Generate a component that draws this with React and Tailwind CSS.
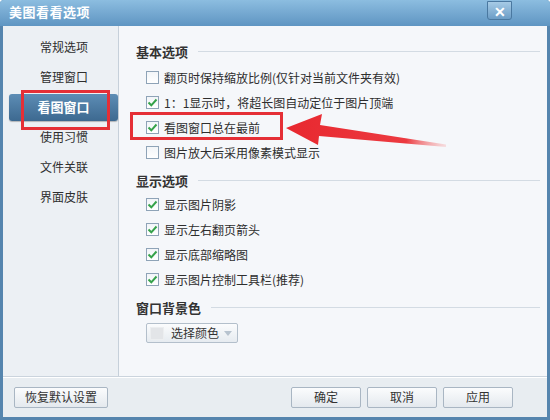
const FONT = { fontFamily: '"Noto Sans CJK SC", "Noto Sans", sans-serif' };

const navItems = ['常规选项', '管理窗口', '看图窗口', '使用习惯', '文件关联', '界面皮肤'];

function CheckBox({ checked }) {
  return (
    <span className="w-[13px] h-[13px] shrink-0 border border-[#8ea3b7] bg-gradient-to-b from-[#f2f5f8] to-white flex items-center justify-center">
      {checked && (
        <svg width="11" height="11" viewBox="0 0 11 11">
          <path d="M1.5 5.5 L4.3 8.3 L9.5 2.5" fill="none" stroke="#35a24a" strokeWidth="2" />
        </svg>
      )}
    </span>
  );
}

function Row({ checked, children }) {
  return (
    <div className="h-[25px] flex items-center gap-[5px] pl-[10px]">
      <CheckBox checked={checked} />
      <span className="text-[12px] text-[#2e2e2e] leading-none">{children}</span>
    </div>
  );
}

function Heading({ children, className = '' }) {
  return (
    <div className={'h-[20px] flex items-center gap-[10px] ' + className}>
      <span className="text-[13px] font-bold text-[#333] leading-none">{children}</span>
      <span className="flex-1 h-px bg-[#d3dbe3] mr-[7px]" />
    </div>
  );
}

function Btn({ children, className = '' }) {
  return (
    <button className={'h-[21px] border border-[#a9b6c3] rounded-[2px] bg-gradient-to-b from-[#fbfcfd] to-[#e4e9ee] text-[12px] text-[#333] leading-none ' + className}>
      {children}
    </button>
  );
}

export default function App() {
  return (
    <div style={FONT} className="relative w-[550px] h-[420px] flex flex-col bg-[#5585ae] rounded-t-[4px] overflow-hidden">
      {/* title bar */}
      <div className="h-[26px] shrink-0 flex items-start justify-between bg-gradient-to-b from-[#8cbde0] to-[#5f95c2] pl-[9px] pr-[38px]">
        <span className="mt-[5px] text-white text-[13px] font-bold leading-none tracking-[0.5px]">美图看看选项</span>
        <span className="mt-px w-[25px] h-[19px] border border-[#4a78a0] rounded-b-[3px] bg-gradient-to-b from-[#a6cbe6] to-[#6c9dc6] flex items-center justify-center text-white text-[14px] font-bold leading-none">
          ✕
        </span>
      </div>

      {/* body */}
      <div className="flex-1 mx-[3px] mb-[3px] flex flex-col bg-[#f5f7fa]">
        <div className="flex h-[350px]">
          {/* sidebar */}
          <div className="w-[116px] shrink-0 bg-[#ecf0f4] border-r border-[#c6d0da] pt-[6px]">
            {navItems.map((t, i) =>
              i === 2 ? (
                <div key={t} className="h-[30px] flex items-center">
                  <div className="relative z-10 ml-[6px] w-[110px] h-[27px] rounded-[3px] bg-gradient-to-b from-[#5d8db5] to-[#3d6990] shadow-[0_1px_1px_rgba(0,0,0,0.25)] flex items-center justify-center text-white text-[13px] font-bold">
                    {t}
                  </div>
                </div>
              ) : (
                <div key={t} className="h-[30px] ml-[6px] w-[110px] flex items-center justify-center text-[12px] text-[#2e2e2e]">
                  {t}
                </div>
              )
            )}
          </div>

          {/* options panel */}
          <div className="flex-1 pt-[15px] pl-[17px]">
            <Heading>基本选项</Heading>
            <div className="mt-[4px]">
              <Row>翻页时保持缩放比例(仅针对当前文件夹有效)</Row>
              <Row checked>1：1显示时，将超长图自动定位于图片顶端</Row>
              <Row checked>看图窗口总在最前</Row>
              <Row>图片放大后采用像素模式显示</Row>
            </div>
            <Heading className="mt-[5px]">显示选项</Heading>
            <div className="mt-[2px]">
              <Row checked>显示图片阴影</Row>
              <Row checked>显示左右翻页箭头</Row>
              <Row checked>显示底部缩略图</Row>
              <Row checked>显示图片控制工具栏(推荐)</Row>
            </div>
            <Heading className="mt-[5px]">窗口背景色</Heading>
            <div className="mt-[6px] ml-[10px] w-[92px] h-[20px] border border-[#b3bfcb] rounded-[2px] bg-gradient-to-b from-[#fbfcfd] to-[#e6ebf0] flex items-center pl-[3px]">
              <span className="w-[14px] h-[13px] bg-[#e3e5e8] border border-[#eceef0]" />
              <span className="ml-[7px] text-[12px] text-[#333] leading-none">选择颜色</span>
              <svg className="ml-[5px]" width="8" height="5" viewBox="0 0 8 5">
                <path d="M0 0 H8 L4 5 Z" fill="#b7c3cf" />
              </svg>
            </div>
          </div>
        </div>

        {/* footer */}
        <div className="flex-1 border-t border-[#cbd4dd] bg-[#e8edf1] shadow-[inset_0_1px_0_#ffffff] flex items-center pl-[11px] pr-[34px]">
          <Btn className="w-[94px]">恢复默认设置</Btn>
          <div className="ml-auto flex gap-[6px]">
            <Btn className="w-[70px]">确定</Btn>
            <Btn className="w-[70px]">取消</Btn>
            <Btn className="w-[70px]">应用</Btn>
          </div>
        </div>
      </div>

      {/* annotations */}
      <div className="absolute left-[21px] top-[90px] w-[89px] h-[40px] border-[3px] border-[#e52f36] z-20" />
      <div className="absolute left-[130px] top-[112px] w-[153px] h-[28px] border-[3px] border-[#e52f36] z-20" />
      <svg className="absolute left-0 top-0 z-20 pointer-events-none" width="550" height="420">
        <defs>
          <linearGradient id="arr" x1="287" y1="128" x2="446" y2="146" gradientUnits="userSpaceOnUse">
            <stop offset="0" stopColor="#e8282f" />
            <stop offset="0.75" stopColor="#ec3a40" />
            <stop offset="1" stopColor="#f6b5b5" stopOpacity="0.4" />
          </linearGradient>
        </defs>
        <polygon
          points="286,128 322,114 320,125 446,144.5 446,147 319,136 318,145"
          fill="url(#arr)"
        />
      </svg>
    </div>
  );
}
